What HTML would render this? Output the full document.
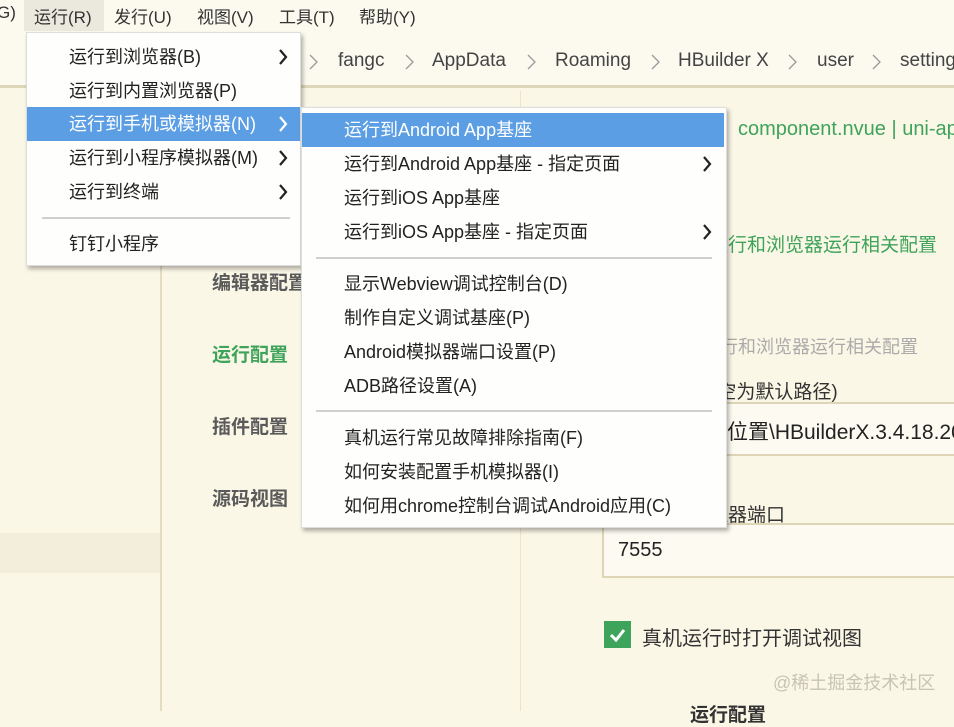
<!DOCTYPE html>
<html><head><meta charset="utf-8">
<style>
*{margin:0;padding:0;box-sizing:border-box}
body{width:954px;height:711px;overflow:hidden;background:#fbf7e6;font-family:"Liberation Sans","Noto Sans CJK SC",sans-serif;color:#333;position:relative}
.a{position:absolute;white-space:nowrap}
.menubar{left:0;top:0;width:954px;height:31px;background:#fcfaef}
.mb{top:3px;font-size:17px;color:#333}
.path{left:0;top:31px;width:954px;height:57px;background:#fcfaef;border-bottom:3px solid #ddd6b8}
.pt{top:50px;font-size:19px;color:#444}
.chev{top:53px}
.menu{background:#fefefc;box-shadow:2px 3px 4px rgba(0,0,0,.3);border:1px solid #ddd}
.it{font-size:18px;color:#222;height:34px;line-height:34px;left:0;right:0;padding-left:42px}
.hl{background:#5b9ee3;color:#fff}
.arr{position:absolute;right:12px;top:9px}
.sep{height:2px;background:#d0d0d0}
.side{font-size:19px;font-weight:bold;color:#5a5a5a}
.green{color:#3ea35b}
.input{background:#fdfbf1;border:2px solid #ddd5b5}
</style></head><body>
<div class="a menubar"></div>
<div class="a" style="left:24px;top:0;width:80px;height:31px;background:#ebe8dd"></div>
<div class="a mb" style="left:-3px">G)</div>
<div class="a mb" style="left:34px">运行(R)</div>
<div class="a mb" style="left:114px">发行(U)</div>
<div class="a mb" style="left:197px">视图(V)</div>
<div class="a mb" style="left:279px">工具(T)</div>
<div class="a mb" style="left:359px">帮助(Y)</div>

<div class="a path"></div>
<svg class="a chev" style="left:308px" width="12" height="18"><path d="M2 2 L9 9 L2 16" stroke="#999" stroke-width="1.3" fill="none"/></svg>
<div class="a pt" style="left:338px">fangc</div>
<svg class="a chev" style="left:404px" width="12" height="18"><path d="M2 2 L9 9 L2 16" stroke="#999" stroke-width="1.3" fill="none"/></svg>
<div class="a pt" style="left:432px">AppData</div>
<svg class="a chev" style="left:526px" width="12" height="18"><path d="M2 2 L9 9 L2 16" stroke="#999" stroke-width="1.3" fill="none"/></svg>
<div class="a pt" style="left:555px">Roaming</div>
<svg class="a chev" style="left:650px" width="12" height="18"><path d="M2 2 L9 9 L2 16" stroke="#999" stroke-width="1.3" fill="none"/></svg>
<div class="a pt" style="left:678px">HBuilder X</div>
<svg class="a chev" style="left:787px" width="12" height="18"><path d="M2 2 L9 9 L2 16" stroke="#999" stroke-width="1.3" fill="none"/></svg>
<div class="a pt" style="left:817px">user</div>
<svg class="a chev" style="left:871px" width="12" height="18"><path d="M2 2 L9 9 L2 16" stroke="#999" stroke-width="1.3" fill="none"/></svg>
<div class="a pt" style="left:900px">settings</div>

<div class="a" style="left:160px;top:91px;width:2px;height:620px;background:#e4dcc0"></div>
<div class="a" style="left:520px;top:91px;width:1px;height:620px;background:#ebe4cc"></div>
<div class="a" style="left:0;top:533px;width:160px;height:40px;background:#f2eedb"></div>

<div class="a side" style="left:212px;top:268px">编辑器配置</div>
<div class="a side green" style="left:212px;top:340px">运行配置</div>
<div class="a side" style="left:212px;top:412px">插件配置</div>
<div class="a side" style="left:212px;top:484px">源码视图</div>

<div class="a green" style="left:738px;top:118px;font-size:20px">component.nvue | uni-app</div>
<div class="a green" style="left:709px;top:230px;font-size:19px">运行和浏览器运行相关配置</div>
<div class="a" style="left:702px;top:333px;font-size:18px;color:#aaa">运行和浏览器运行相关配置</div>
<div class="a" style="left:711px;top:377px;font-size:19px;color:#333">(空为默认路径)</div>
<div class="a input" style="left:602px;top:402px;width:360px;height:54px"></div>
<div class="a" style="left:727px;top:416px;font-size:21px;color:#222">位置\HBuilderX.3.4.18.20</div>
<div class="a" style="left:690px;top:500px;font-size:19px">模拟器端口</div>
<div class="a input" style="left:602px;top:523px;width:360px;height:55px"></div>
<div class="a" style="left:618px;top:539px;font-size:20px;color:#222">7555</div>
<div class="a" style="left:604px;top:621px;width:27px;height:27px;background:#3ea35b"></div>
<svg class="a" style="left:604px;top:621px" width="27" height="27"><path d="M7 14 L12 19 L20 9" stroke="#fff" stroke-width="3" fill="none"/></svg>
<div class="a" style="left:642px;top:622px;font-size:20px">真机运行时打开调试视图</div>
<div class="a" style="left:773px;top:669px;font-size:18px;color:#c8c4b4">@稀土掘金技术社区</div>
<div class="a side" style="left:690px;top:700px;color:#333">运行配置</div>

<div class="a menu" style="left:26px;top:32px;width:275px;height:234px">
 <div class="a it" style="top:7px">运行到浏览器(B)<svg class="arr" width="10" height="16"><path d="M2 1 L8 8 L2 15" stroke="#222" stroke-width="2.2" fill="none"/></svg></div>
 <div class="a it" style="top:41px">运行到内置浏览器(P)</div>
 <div class="a it hl" style="top:74px">运行到手机或模拟器(N)<svg class="arr" width="10" height="16"><path d="M2 1 L8 8 L2 15" stroke="#fff" stroke-width="2.2" fill="none"/></svg></div>
 <div class="a it" style="top:108px">运行到小程序模拟器(M)<svg class="arr" width="10" height="16"><path d="M2 1 L8 8 L2 15" stroke="#222" stroke-width="2.2" fill="none"/></svg></div>
 <div class="a it" style="top:142px">运行到终端<svg class="arr" width="10" height="16"><path d="M2 1 L8 8 L2 15" stroke="#222" stroke-width="2.2" fill="none"/></svg></div>
 <div class="a sep" style="left:15px;top:184px;width:248px"></div>
 <div class="a it" style="top:194px">钉钉小程序</div>
</div>

<div class="a menu" style="left:301px;top:107px;width:426px;height:421px">
 <div class="a it hl" style="top:5px;right:2px">运行到Android App基座</div>
 <div class="a it" style="top:39px">运行到Android App基座 - 指定页面<svg class="arr" style="right:14px" width="10" height="16"><path d="M2 1 L8 8 L2 15" stroke="#222" stroke-width="2.2" fill="none"/></svg></div>
 <div class="a it" style="top:73px">运行到iOS App基座</div>
 <div class="a it" style="top:107px">运行到iOS App基座 - 指定页面<svg class="arr" style="right:14px" width="10" height="16"><path d="M2 1 L8 8 L2 15" stroke="#222" stroke-width="2.2" fill="none"/></svg></div>
 <div class="a sep" style="left:14px;top:149px;width:396px"></div>
 <div class="a it" style="top:159px">显示Webview调试控制台(D)</div>
 <div class="a it" style="top:193px">制作自定义调试基座(P)</div>
 <div class="a it" style="top:227px">Android模拟器端口设置(P)</div>
 <div class="a it" style="top:261px">ADB路径设置(A)</div>
 <div class="a sep" style="left:14px;top:302px;width:396px"></div>
 <div class="a it" style="top:313px">真机运行常见故障排除指南(F)</div>
 <div class="a it" style="top:347px">如何安装配置手机模拟器(I)</div>
 <div class="a it" style="top:381px">如何用chrome控制台调试Android应用(C)</div>
</div>
</body></html>
